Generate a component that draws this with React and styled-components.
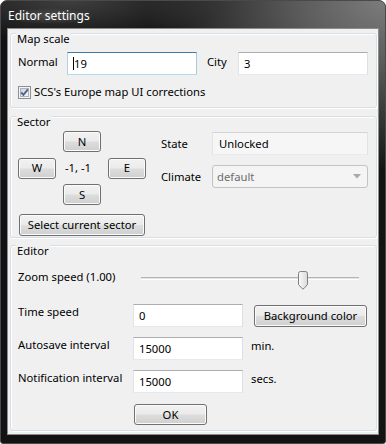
import styled, { createGlobalStyle, css } from "styled-components";

const GlobalStyle = createGlobalStyle`
  html, body {
    margin: 0;
    padding: 0;
    background: #ffffff;
  }
  body {
    font-family: "Noto Sans", "Open Sans", sans-serif;
    font-size: 11.25px;
    color: #000;
  }
  * {
    box-sizing: border-box;
  }
`;

const Window = styled.div`
  width: 386px;
  height: 444px;
  display: flex;
  flex-direction: column;
  padding: 0 6px 8px 6px;
  border: 1px solid #4a4a4a;
  border-radius: 7px 7px 3px 3px;
  background: radial-gradient(240px 170px at 100% 0%, #7c7c7c 0%, #5c5c5c 35%, rgba(20, 20, 20, 0) 100%),
    radial-gradient(150px 40px at 18% 0%, #3f3f3f 0%, rgba(20, 20, 20, 0) 100%), #131313;
`;

const TitleBar = styled.div`
  height: 27px;
  flex-shrink: 0;
  display: flex;
  align-items: center;
`;

const TitleText = styled.span`
  color: #fff;
  font-size: 12px;
  line-height: 16px;
  padding: 0 4px;
  margin: 2px 0 0 -3px;
  background: radial-gradient(closest-side, rgba(110, 110, 110, 0.5), rgba(110, 110, 110, 0));
`;

const Client = styled.div`
  flex: 1;
  display: flex;
  flex-direction: column;
  background: #f0f0f0;
  border: 1px solid #8c8c8c;
  padding: 4px 1px 0 2px;
`;

const GroupBox = styled.section`
  margin-top: ${(p) => p.$mt || 0}px;
  padding: 0 7px ${(p) => p.$pb || 0}px 7px;
  border: 1px solid #d5dfe5;
  border-radius: 3px;
  box-shadow: inset 1px 1px 0 #fff, 1px 1px 0 #fff;
  display: flex;
  flex-direction: column;
`;

const GroupTitle = styled.div`
  align-self: flex-start;
  margin: -3px 0 0 -2px;
  padding: 0 1px;
  line-height: 16px;
  background: #f0f0f0;
`;

const Row = styled.div`
  display: flex;
  align-items: ${(p) => p.$align || "flex-start"};
  margin-top: ${(p) => p.$mt || 0}px;
  margin-left: ${(p) => p.$ml || 0}px;
`;

const Label = styled.span`
  width: ${(p) => p.$w}px;
  margin-top: ${(p) => p.$mt || 0}px;
  margin-left: ${(p) => p.$ml || 0}px;
  flex-shrink: 0;
  line-height: 16px;
  white-space: nowrap;
`;

const TextBox = styled.div`
  width: ${(p) => p.$w}px;
  height: 23px;
  flex-shrink: 0;
  display: flex;
  align-items: center;
  padding: 0 5px;
  background: #fff;
  border: 1px solid;
  border-color: #abadb3 #dbdfe6 #e3e9ef #e2e3ea;
  ${(p) =>
    p.$focused &&
    css`
      border-color: #3d7bad #a4c9e3 #b7d9ed #b5cfe7;
    `}
  ${(p) =>
    p.$readOnly &&
    css`
      background: #f6f6f6;
      border-color: #d3d4d8 #e2e3e7 #e8eaee #e2e3e7;
      padding: 0 6px;
    `}
`;

const Caret = styled.span`
  width: 1px;
  height: 13px;
  background: #000;
`;

const Button = styled.button`
  width: ${(p) => p.$w}px;
  height: ${(p) => p.$h || 21}px;
  margin-top: ${(p) => p.$mt || 0}px;
  margin-left: ${(p) => p.$ml || 0}px;
  flex-shrink: 0;
  padding: 0;
  font: inherit;
  color: #000;
  line-height: 16px;
  border: 1px solid #707070;
  border-radius: 3px;
  background: linear-gradient(#f2f2f2 0%, #ebebeb 48%, #dddddd 52%, #cfcfcf 100%);
  box-shadow: inset 0 0 0 1px #fbfbfb;
`;

const CheckRow = styled.label`
  display: flex;
  align-items: center;
  gap: 3px;
  margin-top: ${(p) => p.$mt || 0}px;
  line-height: 16px;
`;

const SectorBody = styled.div`
  display: flex;
  margin-top: 1px;
`;

const SectorLeft = styled.div`
  width: 128px;
  display: flex;
  flex-direction: column;
`;

const Compass = styled.div`
  display: grid;
  grid-template-columns: 38px 52px 38px;
  grid-template-rows: 21px 21px 21px;
  row-gap: 5.5px;
`;

const CompassButton = styled(Button)`
  grid-column: ${(p) => p.$col};
  grid-row: ${(p) => p.$row};
  justify-self: center;
`;

const Coords = styled.span`
  grid-column: 2;
  grid-row: 2;
  align-self: center;
  padding-left: 9px;
  line-height: 16px;
`;

const SectorInfo = styled.div`
  margin-left: 15px;
  display: flex;
  flex-direction: column;
`;

const Combo = styled.div`
  width: 156px;
  height: 23px;
  display: flex;
  align-items: center;
  justify-content: space-between;
  padding: 0 6px 0 4px;
  color: #6d6d6d;
  background: #f4f4f4;
  border: 1px solid #c3c3c3;
  border-radius: 3px;
`;

const Slider = styled.div`
  position: relative;
  width: 218px;
  height: 18px;
  margin-top: 2px;
`;

const Track = styled.div`
  margin-top: 6px;
  height: 3px;
  border-top: 1px solid #b4b4b4;
  border-bottom: 1px solid #ffffff;
  background: #e3e3e3;
`;

const Thumb = styled.svg`
  position: absolute;
  top: 0;
`;

const Unit = styled.span`
  margin-left: 8px;
  margin-top: 1px;
  line-height: 16px;
`;

function CheckBox() {
  return (
    <svg width="13" height="13" viewBox="0 0 13 13">
      <defs>
        <linearGradient id="cbfill" x1="0" y1="0" x2="1" y2="1">
          <stop offset="0" stopColor="#cdd1d7" />
          <stop offset="1" stopColor="#f7f7f7" />
        </linearGradient>
      </defs>
      <rect x="0.5" y="0.5" width="12" height="12" fill="#f4f4f4" stroke="#8e8f8f" />
      <rect x="2.5" y="2.5" width="8" height="8" fill="url(#cbfill)" stroke="#aeb3b9" />
      <path d="M3.2 6.4 L5.4 8.9 L9.9 3.4" fill="none" stroke="#4a5f97" strokeWidth="1.8" />
    </svg>
  );
}

function ZoomSlider({ value }) {
  return (
    <Slider>
      <Track />
      <Thumb width="10" height="19" viewBox="0 0 10 19" style={{ left: `${value * 208}px` }}>
        <defs>
          <linearGradient id="thumbfill" x1="0" y1="0" x2="1" y2="0">
            <stop offset="0" stopColor="#fafafa" />
            <stop offset="1" stopColor="#d9d9d9" />
          </linearGradient>
        </defs>
        <path
          d="M0.5 2.5 A2 2 0 0 1 2.5 0.5 H7.5 A2 2 0 0 1 9.5 2.5 V13.5 L6 17.5 Q5 18.5 4 17.5 L0.5 13.5 Z"
          fill="url(#thumbfill)"
          stroke="#7f7f7f"
        />
      </Thumb>
    </Slider>
  );
}

export default function App() {
  return (
    <>
      <GlobalStyle />
      <Window>
        <TitleBar>
          <TitleText>Editor settings</TitleText>
        </TitleBar>
        <Client>
          <GroupBox $pb={7}>
            <GroupTitle>Map scale</GroupTitle>
            <Row $mt={5}>
              <Label $w={49} $mt={2}>
                Normal
              </Label>
              <TextBox $w={130} $focused>
                <Caret />
                19
              </TextBox>
              <Label $w={31} $ml={10} $mt={2}>
                City
              </Label>
              <TextBox $w={130}>3</TextBox>
            </Row>
            <CheckRow $mt={9}>
              <CheckBox />
              SCS's Europe map UI corrections
            </CheckRow>
          </GroupBox>

          <GroupBox $mt={8} $pb={1}>
            <GroupTitle>Sector</GroupTitle>
            <SectorBody>
              <SectorLeft>
                <Compass>
                  <CompassButton $w={38} $col={2} $row={1}>
                    N
                  </CompassButton>
                  <CompassButton $w={38} $col={1} $row={2}>
                    W
                  </CompassButton>
                  <Coords>-1, -1</Coords>
                  <CompassButton $w={38} $col={3} $row={2}>
                    E
                  </CompassButton>
                  <CompassButton $w={38} $col={2} $row={3}>
                    S
                  </CompassButton>
                </Compass>
                <Button $w={126} $h={22} $mt={9} $ml={1}>
                  Select current sector
                </Button>
              </SectorLeft>
              <SectorInfo>
                <Row $align="center" $mt={1}>
                  <Label $w={51}>State</Label>
                  <TextBox $w={156} $readOnly>
                    Unlocked
                  </TextBox>
                </Row>
                <Row $align="center" $mt={10}>
                  <Label $w={51}>Climate</Label>
                  <Combo>
                    default
                    <svg width="8" height="5" viewBox="0 0 8 5">
                      <path d="M0 0 H8 L4 4.5 Z" fill="#a8a8a8" />
                    </svg>
                  </Combo>
                </Row>
              </SectorInfo>
            </SectorBody>
          </GroupBox>

          <GroupBox $mt={7} $pb={5}>
            <GroupTitle>Editor</GroupTitle>
            <Row $mt={10}>
              <Label $w={123}>Zoom speed (1.00)</Label>
              <ZoomSlider value={0.755} />
            </Row>
            <Row $mt={15}>
              <Label $w={115}>Time speed</Label>
              <TextBox $w={110}>0</TextBox>
              <Button $w={113} $h={22} $mt={1} $ml={11}>
                Background color
              </Button>
            </Row>
            <Row $mt={10}>
              <Label $w={115}>Autosave interval</Label>
              <TextBox $w={110}>15000</TextBox>
              <Unit>min.</Unit>
            </Row>
            <Row $mt={10}>
              <Label $w={115}>Notification interval</Label>
              <TextBox $w={110}>15000</TextBox>
              <Unit>secs.</Unit>
            </Row>
            <Row $mt={11}>
              <Button $w={73} $ml={116}>
                OK
              </Button>
            </Row>
          </GroupBox>
        </Client>
      </Window>
    </>
  );
}
